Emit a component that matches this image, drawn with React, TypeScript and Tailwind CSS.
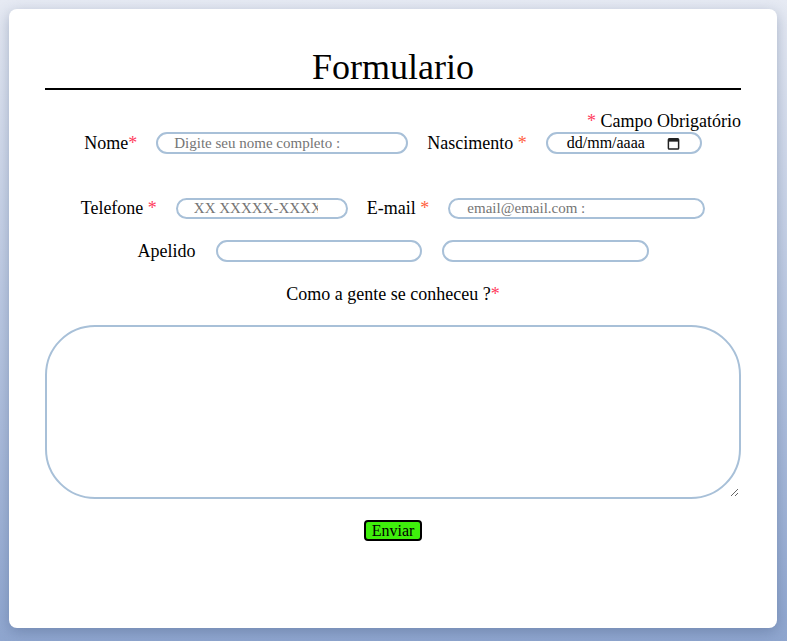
import React from "react";

const serif = { fontFamily: '"Liberation Serif", "Times New Roman", serif' };

function Req({ color = "text-[#ff3b5c]" }: { color?: string }) {
  return <span className={color}>*</span>;
}

export default function App() {
  return (
    <div
      className="w-[787px] h-[641px] bg-gradient-to-b from-[#e6eaf3] to-[#8fa6cf] pt-[9px] pl-[9px] text-black"
      style={serif}
    >
      <div className="w-[768px] h-[619px] bg-white rounded-[8px] shadow-[0_4px_14px_rgba(60,80,120,0.35)] px-[36px] pt-[38px]">
        <h1 className="text-[36px] leading-[41px] text-center border-b-2 border-black">
          Formulario
        </h1>
        <p className="text-[18px] leading-[21px] text-right mt-[21px]">
          <Req /> Campo Obrigatório
        </p>
        <div className="flex items-center justify-center gap-[19px] mt-[0px] h-[22px] text-[18px]">
          <span>
            Nome<Req />
          </span>
          <input
            className="w-[252px] h-[22px] rounded-full border-2 border-[#a8c0d8] pl-[16px] pr-[16px] text-[15px] outline-none placeholder:text-[#757575]"
            style={serif}
            placeholder="Digite seu nome completo :"
          />
          <span>
            Nascimento <Req color="text-[#ff6040]" />
          </span>
          <div className="w-[156px] h-[22px] rounded-full border-2 border-[#a8c0d8] pl-[19px] pr-[20px] flex items-center justify-between text-[16px]">
            <span>dd/mm/aaaa</span>
            <svg width="13" height="13" viewBox="0 0 14 14">
              <rect x="1.5" y="2" width="11" height="11" rx="1" fill="none" stroke="#222" strokeWidth="1.6" />
              <rect x="1.5" y="2" width="11" height="3" fill="#222" />
            </svg>
          </div>
        </div>
        <div className="flex items-center justify-center gap-[19px] mt-[43px] h-[22px] text-[18px]">
          <span>
            Telefone <Req />
          </span>
          <input
            className="w-[172px] h-[21px] rounded-full border-2 border-[#a8c0d8] pl-[16px] pr-[28px] text-[15px] outline-none placeholder:text-[#757575]"
            style={serif}
            placeholder="XX XXXXX-XXXX"
          />
          <span>
            E-mail <Req color="text-[#ff6040]" />
          </span>
          <input
            className="w-[257px] h-[21px] rounded-full border-2 border-[#a8c0d8] pl-[17px] pr-[16px] text-[15px] outline-none placeholder:text-[#757575]"
            style={serif}
            placeholder="email@email.com :"
          />
        </div>
        <div className="flex items-center justify-center gap-[20px] mt-[21px] h-[22px] text-[18px]">
          <span>Apelido</span>
          <input
            className="w-[206px] h-[22px] rounded-full border-2 border-[#a8c0d8] px-[16px] text-[15px] outline-none"
            style={serif}
          />
          <input
            className="w-[207px] h-[22px] rounded-full border-2 border-[#a8c0d8] px-[16px] text-[15px] outline-none"
            style={serif}
          />
        </div>
        <p className="text-[18px] leading-[21px] text-center mt-[22px]">
          Como a gente se conheceu ?<Req />
        </p>
        <textarea
          className="block w-[696px] h-[174px] mt-[20px] rounded-[50px] border-2 border-[#a8c0d8] outline-none p-[16px]"
          style={serif}
        />
        <div className="flex justify-center mt-[21px]">
          <button
            className="h-[21px] px-[6px] bg-[#3ff00c] border-2 border-black rounded-[4px] text-[16px] leading-[17px]"
            style={serif}
          >
            Enviar
          </button>
        </div>
      </div>
    </div>
  );
}
